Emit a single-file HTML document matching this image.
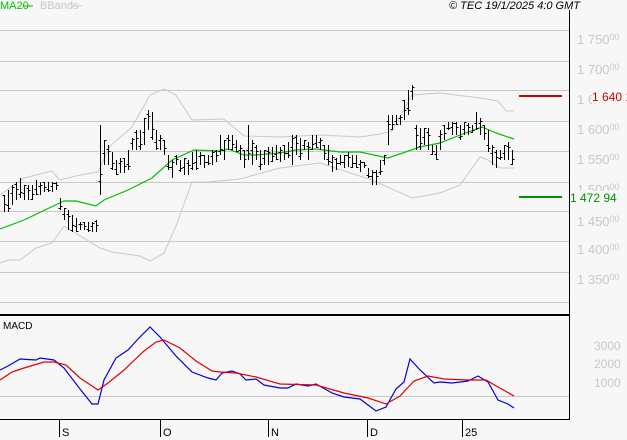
<!DOCTYPE html>
<html><head><meta charset="utf-8"><style>
html,body{margin:0;padding:0;background:#f7f7f7;}
body{width:627px;height:440px;overflow:hidden;position:relative;font-family:"Liberation Sans",sans-serif;}
.lbl{position:absolute;left:577px;color:#c8c8c8;font-size:13px;line-height:13px;white-space:nowrap;}
.lbl sup{font-size:9px;vertical-align:4px;}
.ml{position:absolute;left:594px;color:#c8c8c8;font-size:12px;line-height:12px;white-space:nowrap;}
.ml sup{font-size:8px;vertical-align:4px;}
.t{position:absolute;font-size:11px;white-space:nowrap;}
</style></head><body>
<svg id="s" width="627" height="440" style="position:absolute;left:0;top:0" shape-rendering="crispEdges">
<g stroke="#c8c8c8" stroke-width="1">
<line x1="0" y1="30.5" x2="569" y2="30.5"/><line x1="0" y1="61.5" x2="569" y2="61.5"/>
<line x1="0" y1="90.5" x2="569" y2="90.5"/><line x1="0" y1="121.5" x2="569" y2="121.5"/>
<line x1="0" y1="151.5" x2="569" y2="151.5"/><line x1="0" y1="182.5" x2="569" y2="182.5"/>
<line x1="0" y1="211.5" x2="569" y2="211.5"/><line x1="0" y1="241.5" x2="569" y2="241.5"/>
<line x1="0" y1="272.5" x2="569" y2="272.5"/><line x1="0" y1="302.5" x2="569" y2="302.5"/>
<line x1="0" y1="396.5" x2="569" y2="396.5"/>
</g>
<g fill="none" stroke="#c8c8c8" stroke-width="1" shape-rendering="auto">
<polyline points="0,195 24,178 52,171 60,180 80,175 98,172 110,146 132,127 150,95 164,89 176,95 192,120 224,119 244,136 280,137 320,135 360,137 380,134 392,131 412,95 440,93 480,98 498,101 506,111 514,111"/>
<polyline points="0,263 8,260 20,260 36,248 52,243 64,226 100,248 112,252 140,256 150,261 164,253 176,226 192,182 208,182 240,179 280,168 320,163 372,180 412,198 440,193 460,185 480,157 488,160 500,168 514,168"/>
</g>
<polyline fill="none" stroke="#00c000" stroke-width="1.2" shape-rendering="auto" points="0,229 24,220 64,201 76,201 96,206 104,200 128,190 152,178 172,160 194,150 220,151 228,149 244,155 256,155 280,153 296,150 316,149 340,152 360,152 388,158 420,147 440,143 460,135 482,127 496,133 514,139"/>
<g id="bars" stroke="#000" stroke-width="1"></g>
<line x1="519" y1="96" x2="562" y2="96" stroke="#d00000" stroke-width="2"/>
<line x1="519" y1="197" x2="562" y2="197" stroke="#009000" stroke-width="2"/>
<g fill="none" stroke-width="1.2" shape-rendering="auto">
<polyline stroke="#0000e0" points="0,370 8,366 20,359 36,360 40,358 54,360 64,368 80,389 92,404 98,404 104,380 116,358 128,350 138,339 150,327 160,337 176,356 192,372 208,378 216,380 222,373 232,371 240,374 246,380 256,379 264,385 280,388 288,388 296,384 308,386 316,384 332,393 344,397 360,399 376,411 386,407 396,389 404,382 410,359 420,370 434,383 440,382 452,383 468,381 478,376 488,382 498,400 508,404 514,408"/>
<polyline stroke="#e00000" points="0,380 12,372 24,368 44,362 54,362 66,365 80,378 98,390 108,383 124,370 144,351 156,342 164,340 180,348 196,361 212,371 220,372 236,373 256,377 280,384 316,385 344,393 368,398 386,404 400,396 414,381 428,376 444,379 468,380 486,380 498,387 514,396"/>
</g>
<line x1="569.5" y1="10" x2="569.5" y2="420" stroke="#000" stroke-width="1"/>
<line x1="0" y1="315" x2="569" y2="315" stroke="#000" stroke-width="2"/>
<line x1="0" y1="419.5" x2="570" y2="419.5" stroke="#000" stroke-width="1"/>
<g stroke="#000" stroke-width="1">
<line x1="59.5" y1="420" x2="59.5" y2="437"/><line x1="160.5" y1="420" x2="160.5" y2="437"/>
<line x1="268.5" y1="420" x2="268.5" y2="437"/><line x1="367.5" y1="420" x2="367.5" y2="437"/>
<line x1="462.5" y1="420" x2="462.5" y2="437"/>
</g>
<line x1="23" y1="6" x2="33" y2="6" stroke="#00c000"/>
<line x1="72" y1="6" x2="82" y2="6" stroke="#c8c8c8"/>
</svg>
<div class="t" style="left:0;top:0;color:#00c000">MA20</div>
<div class="t" style="left:40px;top:0;color:#c8c8c8">BBands</div>
<div class="t" style="left:449px;top:0;font-style:italic;color:#000">© TEC 19/1/2025 4:0 GMT</div>
<div class="lbl" style="top:31px">1 750<sup>00</sup></div>
<div class="lbl" style="top:61px">1 700<sup>00</sup></div>
<div class="lbl" style="top:91px">1 650<sup>00</sup></div>
<div class="lbl" style="top:121px">1 600<sup>00</sup></div>
<div class="lbl" style="top:151px">1 550<sup>00</sup></div>
<div class="lbl" style="top:181px">1 500<sup>00</sup></div>
<div class="lbl" style="top:241px">1 400<sup>00</sup></div>
<div class="lbl" style="top:271px">1 350<sup>00</sup></div>
<div class="lbl" style="top:213px">1 450<sup>00</sup></div>
<div style="position:absolute;left:592px;top:90px;color:#d00000;font-size:12px;background:#f7f7f7;white-space:nowrap">1 640 1</div>
<div style="position:absolute;left:570px;top:191px;color:#009000;font-size:12px;background:#f7f7f7;white-space:nowrap">1 472 94</div>
<div class="ml" style="top:340px">3000</div>
<div class="ml" style="top:358px">2000</div>
<div class="ml" style="top:377px">1000</div>
<div class="t" style="left:3px;top:321px;color:#000;font-size:10px">MACD</div>
<div class="t" style="left:62px;top:427px">S</div>
<div class="t" style="left:163px;top:427px">O</div>
<div class="t" style="left:271px;top:427px">N</div>
<div class="t" style="left:370px;top:427px">D</div>
<div class="t" style="left:465px;top:427px">25</div>
<script>
var d=[[4,195,212],[8,190,212],[12,185,205],[16,182,200],[20,178,198],[24,185,200],[28,185,200],[32,185,200],[36,180,195],[40,182,195],[44,182,192],[48,182,192],[52,182,192],[56,182,190],[60,198,210],[64,208,220],[68,210,230],[72,215,232],[76,218,232],[80,222,230],[84,222,230],[88,222,232],[92,222,232],[96,220,232],[100,125,195],[104,140,165],[108,145,165],[112,152,170],[116,160,175],[120,158,173],[124,158,173],[128,150,170],[132,138,150],[136,130,150],[140,130,150],[144,118,145],[148,110,130],[152,112,140],[156,130,150],[160,135,150],[164,140,155],[168,155,170],[172,160,178],[176,155,165],[180,160,172],[184,158,175],[188,160,175],[192,152,170],[196,150,170],[200,152,165],[204,155,168],[208,155,165],[212,150,165],[216,150,162],[220,135,155],[224,140,160],[228,135,150],[232,135,150],[236,140,152],[240,145,160],[244,150,168],[248,125,160],[252,140,165],[256,145,160],[260,150,170],[264,150,165],[268,147,165],[272,147,162],[276,145,160],[280,147,162],[284,145,160],[288,142,158],[292,135,165],[296,135,155],[300,138,160],[304,140,150],[308,142,160],[312,135,150],[316,135,148],[320,138,150],[324,145,160],[328,145,165],[332,155,172],[336,158,170],[340,155,165],[344,155,168],[348,152,167],[352,155,168],[356,155,168],[360,160,172],[364,162,168],[368,168,178],[372,170,185],[376,170,185],[380,160,175],[384,155,165],[388,115,145],[392,115,130],[396,115,125],[400,115,125],[404,100,120],[408,90,115],[412,85,100],[416,125,150],[420,128,150],[424,128,145],[428,128,150],[432,145,155],[436,145,160],[440,130,150],[444,125,140],[448,122,130],[452,122,135],[456,122,135],[460,125,140],[464,122,135],[468,123,135],[472,125,133],[476,112,130],[480,118,135],[484,125,140],[488,130,152],[492,145,165],[496,150,168],[500,150,160],[504,145,160],[508,142,160],[512,150,165]];
var g=document.getElementById('bars'),h='';
d.forEach(function(b,i){var x=b[0]+0.5,o=b[1]+(b[2]-b[1])*((i*7)%10)/10,c=b[1]+(b[2]-b[1])*((i*3+5)%10)/10;
h+='<line x1="'+x+'" y1="'+b[1]+'" x2="'+x+'" y2="'+b[2]+'"/><line x1="'+(x-2)+'" y1="'+Math.round(o)+'.5" x2="'+x+'" y2="'+Math.round(o)+'.5"/><line x1="'+x+'" y1="'+Math.round(c)+'.5" x2="'+(x+2)+'" y2="'+Math.round(c)+'.5"/>';});
g.innerHTML=h;
</script>
</body></html>
